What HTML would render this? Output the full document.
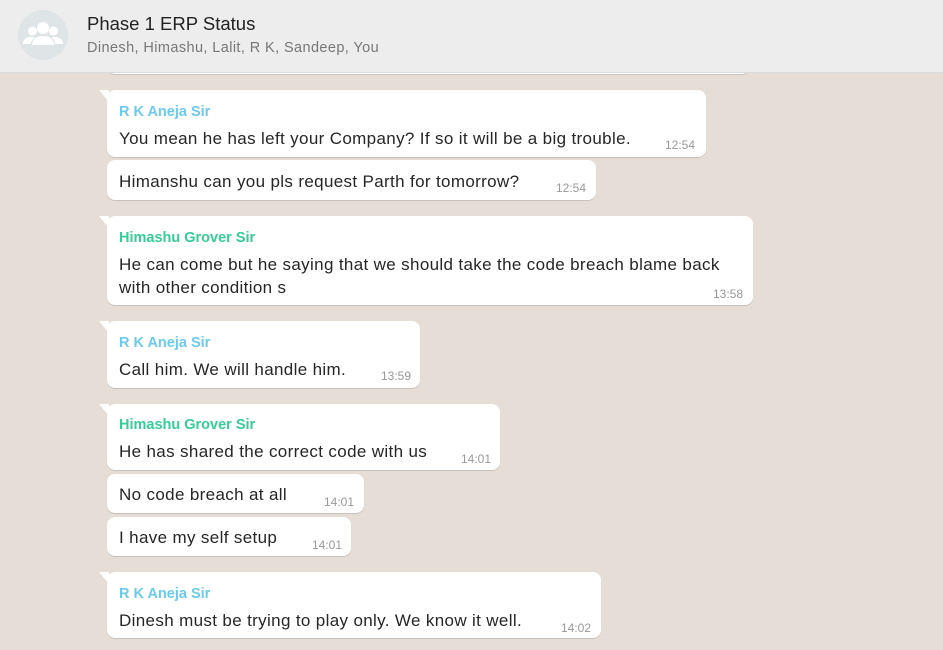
<!DOCTYPE html>
<html><head><meta charset="utf-8"><style>
body{margin:0;width:943px;height:650px;overflow:hidden;background:#e6ded6;font-family:"Liberation Sans",sans-serif;position:relative}
.hdr{position:absolute;left:0;top:0;width:943px;height:72px;background:#ededed;border-bottom:1px solid #dcdcdc;z-index:2}
.av{position:absolute;left:18px;top:10px;width:50px;height:50px;border-radius:50%;background:#dfe5e7}
.t{position:absolute;left:87px;top:13px;font-size:18.5px;color:#222}
.s{position:absolute;left:87px;top:40px;font-size:14.5px;color:#777;letter-spacing:.4px}
.b{position:absolute;background:#fff;border-radius:8px;box-shadow:0 1px 0.5px rgba(0,0,0,.13)}
.n{position:absolute;left:12px;font-size:14.5px;font-weight:bold;white-space:nowrap}
.x{position:absolute;left:12px;font-size:17px;letter-spacing:.35px;color:#262626;white-space:nowrap;line-height:23px}
.tm{position:absolute;font-size:12px;color:#999}
.rk{color:#6bcbef}.hg{color:#35cd96}
.tail{position:absolute;left:-8px;top:0;width:0;height:0;border-right:10px solid #fff;border-bottom:12px solid transparent}
</style></head><body>
<div class="hdr"><div class="av"><svg width="50" height="50" viewBox="0 0 50 50"><g fill="#fff"><circle cx="25" cy="18" r="6"/><circle cx="14.5" cy="21" r="4.5"/><circle cx="35.5" cy="21" r="4.5"/><path d="M14 35c0-6 5-9 11-9s11 3 11 9z"/><path d="M5 34c0-4.5 3.5-7 8-7 2 0 3.5.6 3.5.6-2.5 1.8-3.5 4-3.5 6.4z"/><path d="M45 34c0-4.5-3.5-7-8-7-2 0-3.5.6-3.5.6 2.5 1.8 3.5 4 3.5 6.4z"/></g></svg></div>
<div class="t">Phase 1 ERP Status</div><div class="s">Dinesh, Himashu, Lalit, R K, Sandeep, You</div></div>
<div class="b" style="left:107px;top:40px;width:643px;height:34px"></div>
<div class="b" style="left:107px;top:90px;width:599px;height:67px"><div class="tail"></div><div class="n rk" style="top:14px">R K Aneja Sir</div><div class="x" style="top:37px">You mean he has left your Company? If so it will be a big trouble.</div><div class="tm" style="left:558px;top:48px">12:54</div></div>
<div class="b" style="left:107px;top:160px;width:489px;height:40px"><div class="x" style="top:10px">Himanshu can you pls request Parth for tomorrow?</div><div class="tm" style="left:449px;top:21px">12:54</div></div>
<div class="b" style="left:107px;top:216px;width:646px;height:89px"><div class="tail"></div><div class="n hg" style="top:14px">Himashu Grover Sir</div><div class="x" style="top:37px">He can come but he saying that we should take the code breach blame back<br>with other condition s</div><div class="tm" style="left:606px;top:71px">13:58</div></div>
<div class="b" style="left:107px;top:321px;width:313px;height:67px"><div class="tail"></div><div class="n rk" style="top:14px">R K Aneja Sir</div><div class="x" style="top:37px">Call him. We will handle him.</div><div class="tm" style="left:274px;top:48px">13:59</div></div>
<div class="b" style="left:107px;top:404px;width:393px;height:66px"><div class="tail"></div><div class="n hg" style="top:13px">Himashu Grover Sir</div><div class="x" style="top:36px">He has shared the correct code with us</div><div class="tm" style="left:354px;top:48px">14:01</div></div>
<div class="b" style="left:107px;top:474px;width:257px;height:39px"><div class="x" style="top:9px">No code breach at all</div><div class="tm" style="left:217px;top:21px">14:01</div></div>
<div class="b" style="left:107px;top:517px;width:244px;height:39px"><div class="x" style="top:9px">I have my self setup</div><div class="tm" style="left:205px;top:21px">14:01</div></div>
<div class="b" style="left:107px;top:572px;width:494px;height:66px"><div class="tail"></div><div class="n rk" style="top:14px">R K Aneja Sir</div><div class="x" style="top:37px">Dinesh must be trying to play only. We know it well.</div><div class="tm" style="left:454px;top:49px">14:02</div></div>
</body></html>
